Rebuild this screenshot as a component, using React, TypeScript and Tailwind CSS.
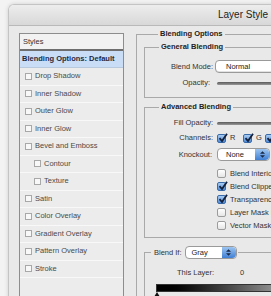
import React from "react";

const font = "font-['Liberation_Sans',Arial,sans-serif]";

const styleRows: { label: string; indent?: boolean }[] = [
  { label: "Drop Shadow" },
  { label: "Inner Shadow" },
  { label: "Outer Glow" },
  { label: "Inner Glow" },
  { label: "Bevel and Emboss" },
  { label: "Contour", indent: true },
  { label: "Texture", indent: true },
  { label: "Satin" },
  { label: "Color Overlay" },
  { label: "Gradient Overlay" },
  { label: "Pattern Overlay" },
  { label: "Stroke" },
];

function AquaCheck({ checked }: { checked?: boolean }) {
  if (!checked) {
    return (
      <span className="inline-block w-[9px] h-[9px] shrink-0 rounded-[2px] border border-[#9c9c9c] bg-gradient-to-b from-white to-[#e6e6e6]" />
    );
  }
  return (
    <span className="relative inline-block w-[9px] h-[9px] shrink-0 rounded-[2px] border border-[#3a6aa8] bg-gradient-to-b from-[#a9cdf3] to-[#4d8ad8]">
      <svg viewBox="0 0 10 10" className="absolute -top-[2px] left-0 w-[10px] h-[10px]">
        <path d="M1.5 5.2 L4 8 L9 0.8" fill="none" stroke="#15203a" strokeWidth="1.8" />
      </svg>
    </span>
  );
}

function Stepper() {
  return (
    <span className="flex flex-col items-center justify-center gap-[1px] w-[14px] self-stretch rounded-r-[4px] bg-gradient-to-b from-[#9cc4f0] to-[#3f7fd4]">
      <svg viewBox="0 0 6 3" className="w-[5px] h-[3px]">
        <path d="M0 3 L3 0 L6 3 Z" fill="#1b2a44" />
      </svg>
      <svg viewBox="0 0 6 3" className="w-[5px] h-[3px]">
        <path d="M0 0 L3 3 L6 0 Z" fill="#1b2a44" />
      </svg>
    </span>
  );
}

function Slider() {
  return (
    <div className="flex items-center h-[12px]">
      <div className="w-[120px] h-[3px] rounded-full bg-gradient-to-b from-[#5a5a5a] to-[#9a9a9a]" />
    </div>
  );
}

export default function App() {
  return (
    <div className={`w-[271px] h-[296px] overflow-hidden bg-[#f3f3f3] ${font} text-[7.5px] leading-[10px] text-[#1a1a1a]`}>
      <div className="ml-[8px] mt-[4px] w-[400px] h-[300px] rounded-tl-[6px] border-l border-t border-[#c4c4c4] shadow-[0_0_4px_rgba(0,0,0,0.15)] flex flex-col overflow-hidden">
        {/* title bar */}
        <div className="h-[21px] shrink-0 bg-gradient-to-b from-[#ededed] to-[#d8d8d8] border-b border-[#b9b9b9] flex items-center pl-[209px]">
          <span className="text-[10px] leading-[12px] text-[#222]">Layer Style</span>
        </div>

        <div className="flex flex-1 bg-[#e9e9e9]">
          {/* styles list */}
          <div className="pl-[10px] pt-[7px]">
            <div className="w-[105px] h-[280px] border border-[#8d8d8d] bg-[#ececec]">
              <div className="h-[17px] flex items-center pl-[3px] bg-[#f2f2f2] border-b-2 border-[#6e6e6e] text-[#333]">
                Styles
              </div>
              <div className="h-[17px] flex items-center pl-[2px] bg-[#c9ddf6] border-b border-[#b8c9de] font-bold text-[#1d2a3f]">
                Blending Options: Default
              </div>
              {styleRows.map((r) => (
                <div
                  key={r.label}
                  className={`h-[17.5px] flex items-center gap-[3px] border-b border-[#f8f8f8] text-[#4a4a4a] ${r.indent ? "pl-[14px]" : "pl-[5px]"}`}
                >
                  <span className="inline-block w-[7px] h-[7px] border border-[#a8a8a8] bg-[#f8f8f8]" />
                  {r.label}
                </div>
              ))}
            </div>
          </div>

          {/* options */}
          <fieldset className="ml-[12px] mt-[3px] w-[230px] border-l border-t border-[#a9a9a9] pl-[7px]">
            <legend className="ml-[14px] px-[2px] font-bold text-[#222]">Blending Options</legend>

            <fieldset className="mt-[3px] w-[200px] border border-[#a9a9a9] pb-[8px]">
              <legend className="ml-[14px] px-[2px] font-bold text-[#222]">General Blending</legend>
              <div className="grid grid-cols-[68px_1fr] gap-x-[4px] gap-y-[4px] pt-[8px] items-center">
                <span className="text-right text-[#333]">Blend Mode:</span>
                <div className="-ml-[2px] h-[13px] w-[90px] rounded-[4px] border border-[#9a9a9a] bg-white shadow-[inset_0_-1px_0_#e2e2e2] flex items-center pl-[10px] text-[#222]">
                  Normal
                </div>
                <span className="text-right pr-[3px] text-[#333]">Opacity:</span>
                <Slider />
              </div>
            </fieldset>

            <fieldset className="mt-[4px] w-[200px] border border-[#a9a9a9] pb-[5px]">
              <legend className="ml-[14px] px-[2px] font-bold text-[#222]">Advanced Blending</legend>
              <div className="grid grid-cols-[68px_1fr] gap-x-[4px] pt-[5px] items-center">
                <span className="h-[12px] flex items-center justify-end text-[#333]">Fill Opacity:</span>
                <Slider />
                <span className="mt-[3px] h-[12px] flex items-center justify-end text-[#333]">Channels:</span>
                <div className="mt-[3px] h-[12px] flex items-center text-[#333]">
                  <AquaCheck checked />
                  <span className="ml-[4px] w-[13px]">R</span>
                  <AquaCheck checked />
                  <span className="ml-[4px] w-[9px]">G</span>
                  <AquaCheck checked />
                  <span className="ml-[4px]">B</span>
                </div>
                <span className="mt-[4px] h-[13px] flex items-center justify-end pr-[1px] text-[#333]">Knockout:</span>
                <div className="mt-[4px] h-[13px] w-[53px] rounded-[4px] border border-[#9a9a9a] bg-white flex items-stretch">
                  <span className="flex-1 flex items-center pl-[8px] text-[#222]">None</span>
                  <Stepper />
                </div>
                <div className="col-start-2 mt-[6px] flex flex-col">
                  {[
                    ["Blend Interior Effects as Group", false],
                    ["Blend Clipped Layers as Group", true],
                    ["Transparency Shapes Layer", true],
                    ["Layer Mask Hides Effects", false],
                    ["Vector Mask Hides Effects", false],
                  ].map(([label, on]) => (
                    <div key={label as string} className="h-[13px] flex items-center gap-[4px] whitespace-nowrap text-[#333]">
                      <AquaCheck checked={on as boolean} />
                      {label as string}
                    </div>
                  ))}
                </div>
              </div>
            </fieldset>

            <fieldset className="mt-[8px] w-[200px] border border-[#a9a9a9] pb-[10px]">
              <legend className="ml-[6px] pl-[3px] pr-[1px] flex items-center gap-[3px] text-[#333]">
                Blend If:
                <span className="h-[13px] w-[52px] rounded-[4px] border border-[#9a9a9a] bg-white flex items-stretch">
                  <span className="flex-1 flex items-center pl-[6px] text-[#222]">Gray</span>
                  <Stepper />
                </span>
              </legend>
              <div className="pt-[9px] flex items-center h-[19px] text-[#333]">
                <span className="ml-[32px]">This Layer:</span>
                <span className="ml-[26px]">0</span>
              </div>
              <div className="mt-[6px] ml-[11px] h-[8px] w-[180px] border border-[#333] bg-gradient-to-r from-black to-white" />
              <svg viewBox="0 0 6 5" className="ml-[9px] w-[6px] h-[5px]">
                <path d="M3 0 L6 5 L0 5 Z" fill="#111" />
              </svg>
            </fieldset>
          </fieldset>
        </div>
      </div>
    </div>
  );
}
